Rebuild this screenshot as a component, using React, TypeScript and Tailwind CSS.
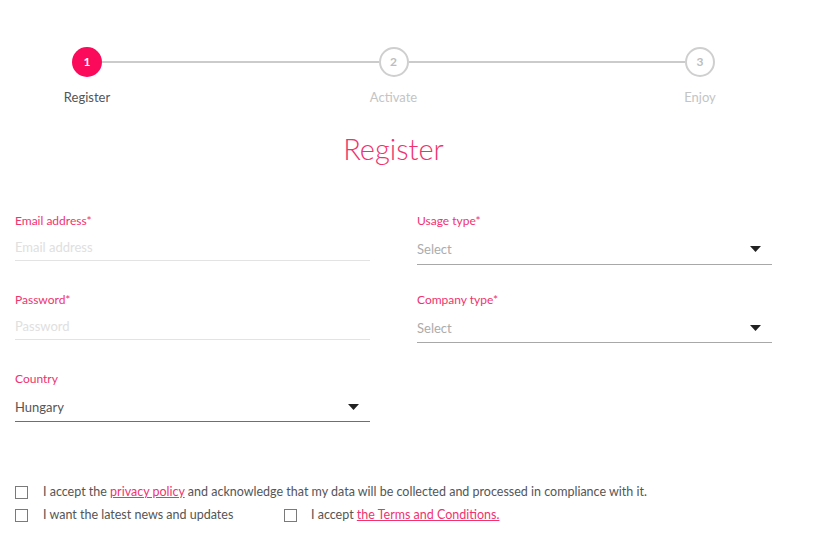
const pink = 'text-[#f0326f]'

function Step({ n, active }: { n: number; active?: boolean }) {
  return (
    <div
      className={
        active
          ? 'flex h-[30px] w-[30px] shrink-0 items-center justify-center rounded-full bg-[#fb0a5c] text-[12px] font-bold text-white'
          : 'flex h-[30px] w-[30px] shrink-0 items-center justify-center rounded-full border-2 border-[#cfcfcf] bg-white text-[12px] font-bold text-[#bdbdbd]'
      }
    >
      {n}
    </div>
  )
}

function Caret() {
  return (
    <svg width="11" height="6" viewBox="0 0 11 6" className="mr-[11px]">
      <path d="M0 0h11L5.5 6z" fill="#222" />
    </svg>
  )
}

function TextField({ label, placeholder }: { label: string; placeholder: string }) {
  return (
    <div className="flex flex-col">
      <label className={`text-[12px] leading-[16px] ${pink}`}>{label}</label>
      <div className="border-b border-[#e3e3e3] pb-[5px] pt-[10px] text-[13px] leading-[16px] text-[#e0e0e0]">
        {placeholder}
      </div>
    </div>
  )
}

function SelectField({
  label,
  value,
  muted,
  pb = 'pb-[7px]',
}: {
  label: string
  value: string
  muted?: boolean
  pb?: string
}) {
  return (
    <div className="flex flex-col">
      <label className={`text-[12px] leading-[16px] ${pink}`}>{label}</label>
      <div
        className={`flex items-center justify-between border-b pt-[12px] text-[13px] leading-[16px] ${pb} ${
          muted ? 'border-[#a8a8a8] text-[#acacac]' : 'border-[#6f6f6f] text-[#555]'
        }`}
      >
        <span>{value}</span>
        <Caret />
      </div>
    </div>
  )
}

function Box() {
  return <span className="h-[13px] w-[13px] shrink-0 border border-[#7a7a7a] bg-white" />
}

export default function App() {
  return (
    <div className="min-h-[534px] w-[815px] bg-white font-['Lato',sans-serif]">
      <div className="ml-[15px] w-[757px] pt-[47px]">
        {/* stepper */}
        <div className="flex items-center px-[57px]">
          <Step n={1} active />
          <div className="h-[2px] flex-1 bg-[#cbcbcb]" />
          <Step n={2} />
          <div className="h-[2px] flex-1 bg-[#cbcbcb]" />
          <Step n={3} />
        </div>
        <div className="mt-[12px] flex justify-between text-[13px] leading-[16px]">
          <span className="w-[144px] text-center text-[#555]">Register</span>
          <span className="w-[144px] text-center text-[#c4c4c4]">Activate</span>
          <span className="w-[144px] text-center text-[#c4c4c4]">Enjoy</span>
        </div>

        <h1 className={`mt-[26px] text-center text-[29px] font-light leading-[36px] ${pink}`}>Register</h1>

        {/* form */}
        <div className="mt-[46px] grid grid-cols-2 gap-x-[47px]">
          <div className="flex flex-col">
            <TextField label="Email address*" placeholder="Email address" />
            <div className="mt-[31px]">
              <TextField label="Password*" placeholder="Password" />
            </div>
            <div className="mt-[31px]">
              <SelectField label="Country" value="Hungary" pb="pb-[6px]" />
            </div>
          </div>
          <div className="flex flex-col">
            <SelectField label="Usage type*" value="Select" muted />
            <div className="mt-[27px]">
              <SelectField label="Company type*" value="Select" muted pb="pb-[6px]" />
            </div>
          </div>
        </div>

        {/* consents */}
        <div className="mt-[62px] flex flex-col gap-[7px] text-[12.5px] leading-[16px] text-[#555]">
          <div className="flex items-center gap-[15px]">
            <Box />
            <span>
              I accept the <a className={`underline ${pink}`}>privacy policy</a> and acknowledge that my data will be
              collected and processed in compliance with it.
            </span>
          </div>
          <div className="flex items-center">
            <div className="flex w-[269px] items-center gap-[15px]">
              <Box />
              <span>I want the latest news and updates</span>
            </div>
            <div className="flex items-center gap-[14px]">
              <Box />
              <span>
                I accept <a className={`underline ${pink}`}>the Terms and Conditions.</a>
              </span>
            </div>
          </div>
        </div>
      </div>
    </div>
  )
}
